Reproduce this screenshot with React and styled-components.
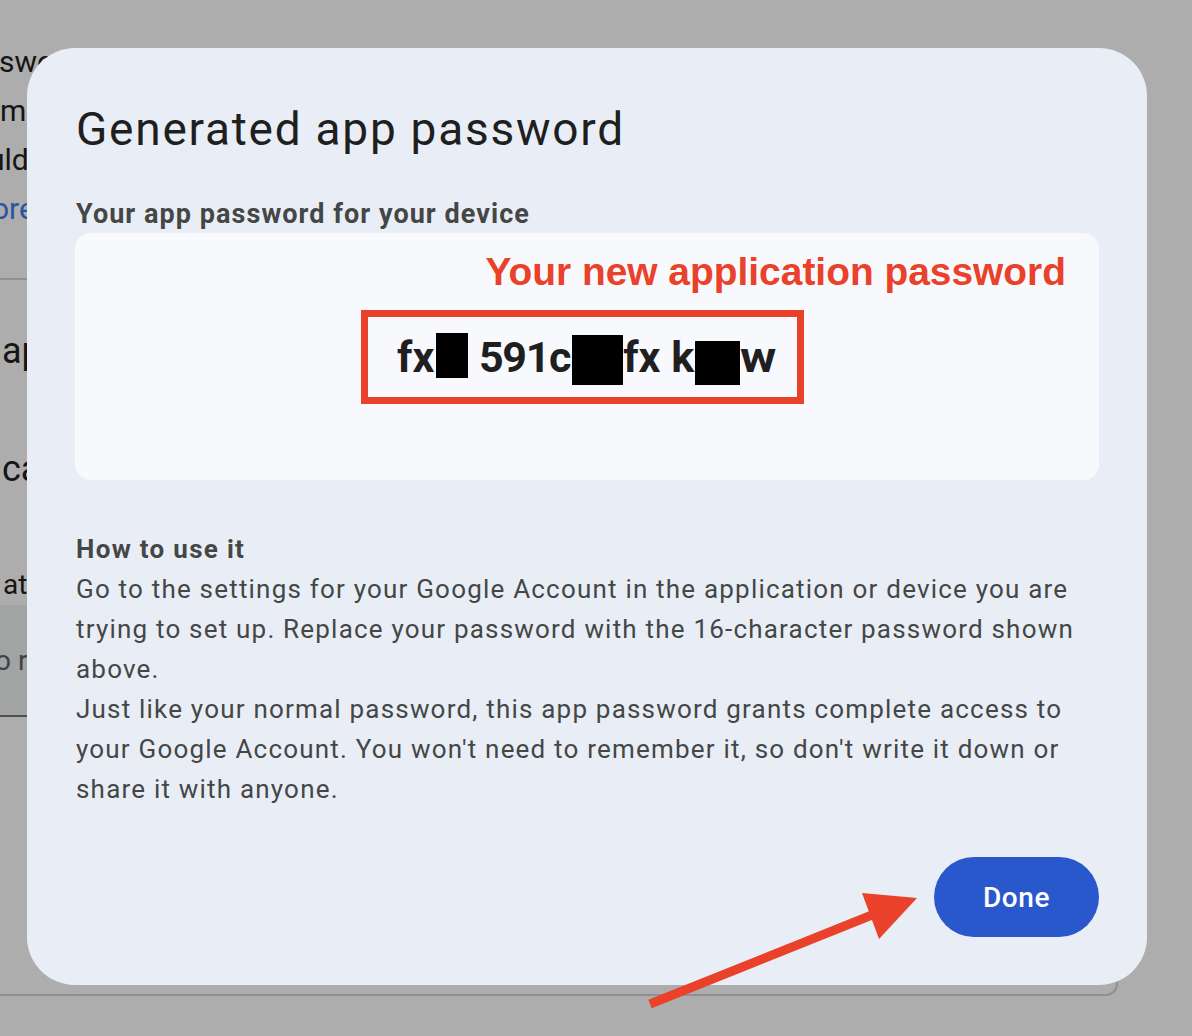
import React from "react";
import styled, { createGlobalStyle } from "styled-components";

const GlobalStyle = createGlobalStyle`
  html, body { margin: 0; padding: 0; background: #ffffff; overflow: hidden; }
  body { font-family: Roboto, "Noto Sans", Arial, sans-serif; }
  * { box-sizing: border-box; }
`;

const Page = styled.div`
  width: 1192px;
  height: 1036px;
  overflow: hidden;
  padding-top: 37px;
`;

const IntroLine = styled.div`
  font-size: 30px;
  line-height: 49px;
  color: ${(p) => p.$color || "#1f1f1f"};
  margin-left: ${(p) => p.$shift || 0}px;
  white-space: nowrap;
`;

const Card = styled.div`
  margin-top: 45px;
  margin-left: -40px;
  width: 1158px;
  height: 718px;
  border: 2px solid #d4d5d6;
  border-radius: 12px;
  padding: 47px 0 0 40px;
  display: flex;
  flex-direction: column;
`;

const CardText = styled.div`
  font-size: ${(p) => p.$size}px;
  line-height: ${(p) => p.$lh}px;
  margin-top: ${(p) => p.$top || 0}px;
  margin-left: ${(p) => p.$shift || 0}px;
  color: #1f1f1f;
  white-space: nowrap;
`;

const Field = styled.div`
  margin-top: -2px;
  margin-left: -40px;
  padding-left: 33px;
  height: 112px;
  background: #eff0f1;
  border-bottom: 2px solid #747775;
  display: flex;
  align-items: center;
  font-size: 28px;
  color: #5f6368;
  white-space: nowrap;
`;

const Scrim = styled.div`
  position: fixed;
  inset: 0;
  background: rgba(0, 0, 0, 0.32);
  display: flex;
  align-items: flex-start;
  padding: 48px 0 0 27px;
`;

const Dialog = styled.div`
  width: 1120px;
  background: #e9eef6;
  border-radius: 48px;
  padding: 53px 48px 48px 48px;
  display: flex;
  flex-direction: column;
`;

const Title = styled.h1`
  margin: 0;
  padding-left: 1px;
  font-size: 46px;
  font-weight: 400;
  line-height: 56px;
  letter-spacing: 1.75px;
  color: #1f1f1f;
`;

const SubHeading = styled.div`
  margin-top: 41px;
  padding-left: 1px;
  font-size: 27px;
  font-weight: 700;
  line-height: 32px;
  letter-spacing: 1.05px;
  color: #444746;
`;

const PasswordPanel = styled.div`
  margin-top: 3px;
  height: 247px;
  background: #f8f9fd;
  border-radius: 16px;
  padding: 17px 33px 0 0;
  display: flex;
  flex-direction: column;
`;

const Annotation = styled.div`
  align-self: flex-end;
  font-family: "Liberation Sans", Arial, sans-serif;
  font-weight: 700;
  font-size: 38.9px;
  line-height: 44px;
  color: #e9412a;
`;

const Frame = styled.div`
  align-self: flex-start;
  margin: 16px 0 0 286px;
  border: 7px solid #e9412a;
  padding: 0 25px 0 29px;
  font-size: 43px;
  font-weight: 700;
  line-height: 80px;
  color: #1f1f1f;
  white-space: nowrap;
`;

const Tight = styled.span`
  letter-spacing: -1.3px;
`;

const Wide = styled.span`
  display: inline-block;
  transform: scaleX(1.15);
  transform-origin: left center;
`;

const Redact = styled.span`
  display: inline-block;
  width: ${(p) => p.$w}px;
  height: ${(p) => p.$h}px;
  vertical-align: ${(p) => p.$drop}px;
  margin: 0 ${(p) => p.$mr || 0}px 0 ${(p) => p.$ml || 0}px;
  background: #000;
`;

const HowTitle = styled.div`
  margin-top: 49px;
  padding-left: 1px;
  font-size: 26px;
  font-weight: 700;
  line-height: 40px;
  letter-spacing: 1.3px;
  color: #444746;
`;

const Body = styled.p`
  margin: 0;
  padding-left: 1px;
  font-size: 26px;
  line-height: 40px;
  letter-spacing: 1.2px;
  color: #444746;
  white-space: nowrap;
`;

const DoneButton = styled.button`
  align-self: flex-end;
  margin-top: 48px;
  width: 165px;
  height: 80px;
  border: none;
  border-radius: 40px;
  background: #2858cc;
  color: #ffffff;
  font-family: Roboto, "Noto Sans", Arial, sans-serif;
  font-size: 28px;
  font-weight: 500;
  letter-spacing: 0.6px;
  cursor: pointer;
`;

const ArrowLayer = styled.svg`
  position: fixed;
  left: 0;
  top: 0;
  width: 1192px;
  height: 1036px;
  pointer-events: none;
`;

export default function App() {
  return (
    <>
      <GlobalStyle />
      <Page>
        <IntroLine $shift={-1}>swords help you sign in</IntroLine>
        <IntroLine>modern security</IntroLine>
        <IntroLine $shift={-12}>uld check first</IntroLine>
        <IntroLine $shift={-8} $color="#3d7bf0">ore</IntroLine>
        <Card>
          <CardText $size={36} $lh={48}>apps</CardText>
          <CardText $size={36} $lh={48} $top={70}>can</CardText>
          <CardText $size={28} $lh={44} $top={70} $shift={1}>at</CardText>
          <Field>o r</Field>
        </Card>
      </Page>

      <Scrim>
        <Dialog role="dialog" aria-label="Generated app password">
          <Title>Generated app password</Title>
          <SubHeading>Your app password for your device</SubHeading>
          <PasswordPanel>
            <Annotation>Your new application password</Annotation>
            <Frame>
              fx<Redact $w={32} $h={45} $drop={-6} $ml={2} />
              {" "}<Tight>591c</Tight><Redact $w={51} $h={50} $drop={-13} $ml={2} />
              fx k<Redact $w={45} $h={44} $drop={-13} $ml={1} /><Wide>w</Wide>
            </Frame>
          </PasswordPanel>
          <HowTitle>How to use it</HowTitle>
          <Body>
            Go to the settings for your Google Account in the application or device you are
            <br />
            trying to set up. Replace your password with the 16-character password shown
            <br />
            above.
            <br />
            Just like your normal password, this app password grants complete access to
            <br />
            your Google Account. You won't need to remember it, so don't write it down or
            <br />
            share it with anyone.
          </Body>
          <DoneButton>Done</DoneButton>
        </Dialog>
      </Scrim>

      <ArrowLayer viewBox="0 0 1192 1036">
        <line x1="650" y1="1004" x2="872" y2="915" stroke="#e9412a" strokeWidth="9" />
        <polygon points="862,893 917,898 879,939" fill="#e9412a" />
      </ArrowLayer>
    </>
  );
}
